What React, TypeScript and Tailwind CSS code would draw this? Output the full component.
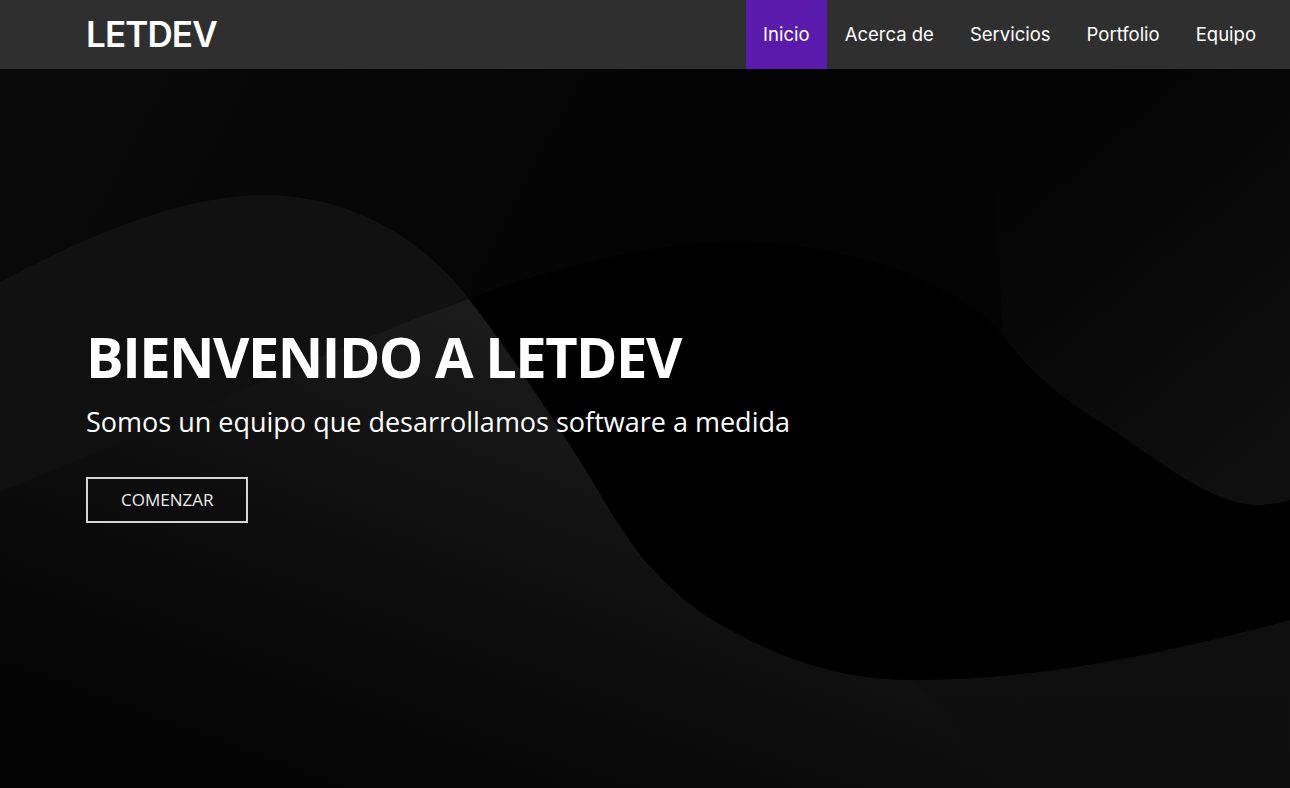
import React from "react";

const navItems = ["Inicio", "Acerca de", "Servicios", "Portfolio", "Equipo"];

function WaveBackground() {
    return (
        <svg
            className="absolute inset-0 h-full w-full"
            viewBox="0 69 1290 719"
            preserveAspectRatio="none"
            aria-hidden="true"
        >
            <defs>
                <linearGradient id="base" x1="0" y1="0" x2="1" y2="0.3">
                    <stop offset="0" stopColor="#0a0a0a" />
                    <stop offset="0.55" stopColor="#030303" />
                    <stop offset="1" stopColor="#030303" />
                </linearGradient>
                <linearGradient id="lower" x1="0" y1="0" x2="0" y2="1">
                    <stop offset="0" stopColor="#111111" />
                    <stop offset="1" stopColor="#0e0e0e" />
                </linearGradient>
                <linearGradient
                    id="tri"
                    gradientUnits="userSpaceOnUse"
                    x1="480"
                    y1="300"
                    x2="300"
                    y2="788"
                >
                    <stop offset="0" stopColor="#1c1c1c" />
                    <stop offset="0.3" stopColor="#131313" />
                    <stop offset="0.45" stopColor="#0f0f0f" />
                    <stop offset="1" stopColor="#040404" />
                </linearGradient>
                <linearGradient
                    id="wing"
                    gradientUnits="userSpaceOnUse"
                    x1="1030"
                    y1="140"
                    x2="1290"
                    y2="440"
                >
                    <stop offset="0" stopColor="#030303" />
                    <stop offset="1" stopColor="#0f0f0f" />
                </linearGradient>
            </defs>

            <rect x="0" y="69" width="1290" height="719" fill="url(#base)" />

            {/* right wing */}
            <path
                d="M980,69 C1000,160 998,260 1003,336 C1040,385 1080,410 1110,428 C1170,470 1220,508 1262,505 C1275,504 1285,502 1290,500 L1290,69 Z"
                fill="url(#wing)"
            />

            {/* everything under the big wave */}
            <path
                d="M0,282 C100,229 200,189 284,196 C370,203 430,249 469,299 C500,339 530,384 559,428 C590,474 615,524 645,561 C675,594 700,614 727,628 C790,664 850,680 912,680 C1050,680 1180,649 1290,620 L1290,788 L0,788 Z"
                fill="url(#lower)"
            />

            {/* lighter wedge under the second curve */}
            <path
                d="M0,491 C120,446 300,360 469,299 C500,339 530,384 559,428 C590,474 615,524 645,561 C675,594 700,614 727,628 C790,664 850,680 912,680 C950,720 980,760 1000,788 L0,788 Z"
                fill="url(#tri)"
            />

            {/* big black shape */}
            <path
                d="M469,299 C560,265 650,245 720,242 C830,238 960,280 1003,336 C1040,385 1080,410 1110,428 C1170,470 1220,508 1262,505 C1275,504 1285,502 1290,500 L1290,620 C1180,649 1050,680 912,680 C850,680 790,664 727,628 C700,614 675,594 645,561 C615,524 590,474 559,428 C530,384 500,339 469,299 Z"
                fill="#000000"
            />
        </svg>
    );
}

export default function App() {
    return (
        <div className="min-h-screen w-full bg-black">
            <header className="flex h-[69px] items-stretch justify-between bg-[#2f2f2f] pl-[86px] pr-[16px] font-['Inter',sans-serif]">
                <div className="flex items-center text-[35px] font-semibold tracking-tight text-white">
                    LETDEV
                </div>
                <nav className="flex items-stretch">
                    {navItems.map((item, i) => (
                        <a
                            key={item}
                            href="#"
                            className={
                                i === 0
                                    ? "flex items-center bg-[#5a1aab] px-[17px] text-[18.5px] text-white"
                                    : "flex items-center px-[18px] text-[18.5px] text-white"
                            }
                        >
                            {item}
                        </a>
                    ))}
                </nav>
            </header>

            <section className="relative h-[719px] overflow-hidden">
                <WaveBackground />
                <div className="relative flex flex-col items-start pl-[86px] pt-[254px] font-['Open_Sans',sans-serif] text-white">
                    <h1 className="text-[56px] font-bold leading-[1.2] tracking-[-1.5px]">
                        BIENVENIDO A LETDEV
                    </h1>
                    <p className="mt-[12px] text-[27px] leading-[1.5]">
                        Somos un equipo que desarrollamos software a medida
                    </p>
                    <a
                        href="#"
                        className="mt-[34px] border-2 border-[#d6d6d6] px-[33px] py-[8px] text-[17px] leading-[26px] text-[#ececec]"
                    >
                        COMENZAR
                    </a>
                </div>
            </section>
        </div>
    );
}
